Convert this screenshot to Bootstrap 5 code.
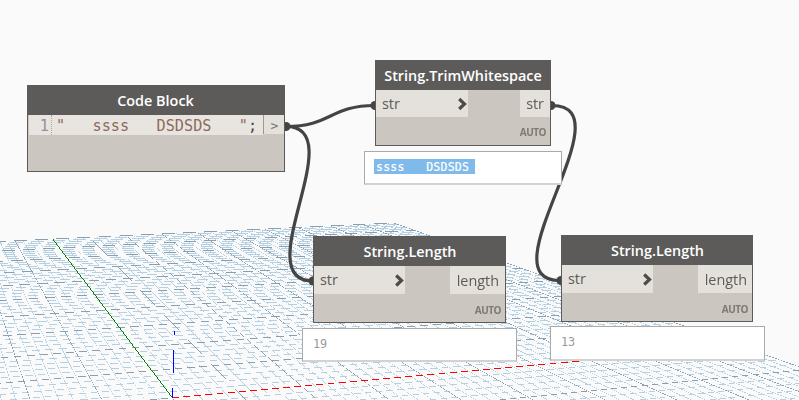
<!DOCTYPE html>
<html lang="en">
<head>
<meta charset="utf-8">
<title>Node graph</title>
<link href="https://cdn.jsdelivr.net/npm/bootstrap@5.3.0/dist/css/bootstrap.min.css" rel="stylesheet">
<style>
body{margin:0;background:#fafafa;font-family:"Open Sans","Noto Sans",sans-serif;color:#5d5b59}
.workspace{width:799px;height:400px}
.layer{left:0;top:0}
.node{background:#cbc6bf;border:1px solid #5d5b59}
.node-title{background:#5d5b59;color:#fff;font-weight:600;font-size:14.4px;height:29px;line-height:30px}
.n-code .node-title{padding-right:1px}
.n-len1 .node-title,.n-len2 .node-title{padding-left:1px}
.ports{height:28px;font-size:14.4px;line-height:30px}
.n-trim .ports{height:27px;line-height:28px}
.port{background:#e4e1dc}
.port-in{width:91px;padding:0 0 0 6px}
.n-trim .port-in{width:92px}
.port-out{padding:0 6px 0 7px}
.n-len2 .port-out{padding:0 5px 0 7px}
.n-trim .port-out{padding:0 6px 0 6px}
.lacing{font-size:10px;font-weight:700;color:#7d7974;padding-right:4px;line-height:31px;height:28px;letter-spacing:-.5px}
.n-len1 .lacing,.n-len2 .lacing{line-height:32px}
.n-code{left:27px;top:85px;width:258px;height:87px}
.n-trim{left:375px;top:60px;width:176px;height:86px}
.n-len1{left:313px;top:236px;width:193px;height:87px}
.n-len2{left:561px;top:235px;width:192px;height:87px}
.code-row{height:20px;font:15.2px/22px "DejaVu Sans Mono",monospace;white-space:pre}
.code-text{background:#e8e5e1;width:234px;margin-left:1px;color:#8e6a5c}
.gutter{width:23px;color:#929292;border-right:1px dotted #aaa;padding-right:2px}
.code-end{color:#444}
.code-port{width:21px;height:19px;background:#e4e1dc;border-left:1px solid #999;font-size:13px;color:#777;padding-left:1px}
.watch{background:#fff;border:1px solid #aaa;border-bottom:2px solid #d2d2d2;font:11.8px/16px "DejaVu Sans Mono",monospace;white-space:pre;color:#999;padding:7px 0 0 10px}
.w1{left:364px;top:151px;width:198px;height:34px;padding-left:9px}
.w2{left:302px;top:328px;width:215px;height:34px}
.w3{left:550px;top:326px;width:215px;height:35px}
.picked{background:#7fbaea;color:#fff;height:15px;line-height:17px;width:101px;padding-left:2px;font-size:11.5px;letter-spacing:.24px;-webkit-text-stroke:.2px #fff}
</style>
</head>
<body>
<main class="workspace position-relative overflow-hidden">
<canvas id="grid" class="layer position-absolute" width="799" height="400"></canvas>
<svg class="layer position-absolute" width="799" height="400" fill="none" stroke="#444" stroke-width="3.200">
<path d="M286 126.500C331 126.500 330 105.500 375 105.500M286 126.500C353 126.500 246 281 313 281M552 105.500C629 105.500 483 280.500 560 280.500"/>
<g fill="#444" stroke="none"><circle cx="286" cy="126.500" r="4.500"/><circle cx="375" cy="105.500" r="4.500"/><circle cx="551" cy="105.500" r="4.500"/><circle cx="313" cy="281" r="4.500"/><circle cx="561" cy="280.500" r="4.500"/></g>
</svg>

<section class="node n-code position-absolute">
<div class="node-title text-center">Code Block</div>
<div class="code-row d-flex"><div class="code-text d-flex"><span class="gutter text-end">1</span><span class="ps-1">"   ssss   DSDSDS   "<span class="code-end">;</span></span></div><div class="code-port text-center">&gt;</div></div>
</section>

<section class="node n-trim position-absolute">
<div class="node-title text-center">String.TrimWhitespace</div>
<div class="ports d-flex justify-content-between"><div class="port port-in d-flex justify-content-between align-items-center"><span>str</span><svg width="11" height="14" viewBox="0 0 11 14" fill="none" stroke="#4d4b49" stroke-width="3.200"><path d="M2.200 2L7.500 7L2.200 12"/></svg></div><div class="port port-out">str</div></div>
<div class="lacing text-end">AUTO</div>
</section>
<div class="watch w1 position-absolute"><div class="picked">ssss   DSDSDS</div></div>

<section class="node n-len1 position-absolute">
<div class="node-title text-center">String.Length</div>
<div class="ports d-flex justify-content-between"><div class="port port-in d-flex justify-content-between align-items-center"><span>str</span><svg width="11" height="14" viewBox="0 0 11 14" fill="none" stroke="#4d4b49" stroke-width="3.200"><path d="M2.200 2.500L7.500 7.500L2.200 12.500"/></svg></div><div class="port port-out">length</div></div>
<div class="lacing text-end">AUTO</div>
</section>
<div class="watch w2 position-absolute">19</div>

<section class="node n-len2 position-absolute">
<div class="node-title text-center">String.Length</div>
<div class="ports d-flex justify-content-between"><div class="port port-in d-flex justify-content-between align-items-center"><span>str</span><svg width="11" height="14" viewBox="0 0 11 14" fill="none" stroke="#4d4b49" stroke-width="3.200"><path d="M2.200 2.500L7.500 7.500L2.200 12.500"/></svg></div><div class="port port-out">length</div></div>
<div class="lacing text-end">AUTO</div>
</section>
<div class="watch w3 position-absolute">13</div>
</main>
<script src="https://cdn.jsdelivr.net/npm/bootstrap@5.3.0/dist/js/bootstrap.bundle.min.js"></script>
<script>
// Ground plane: unit grid from -50 to 50 seen in perspective, every fifth line darker.
const ctx = document.getElementById('grid').getContext('2d');
const A = 0.003486, B = 0.01699, MIN_W = 0.7;
const hom = (k, j) => [172.3 + k*A*4010 - j*B*88, 397.8 + (k*A + j*B)*52, 1 + k*A + j*B];
function line(k0, j0, k1, j1, color, gate) {
  let p = hom(k0, j0), q = hom(k1, j1);
  if (p[2] < MIN_W && q[2] < MIN_W) return;
  if (p[2] < MIN_W) { const t = (MIN_W - p[2])/(q[2] - p[2]); p = p.map((v, i) => v + t*(q[i] - v)); }
  const x0 = p[0]/p[2], y0 = p[1]/p[2], x1 = q[0]/q[2], y1 = q[1]/q[2];
  ctx.fillStyle = color;
  if (Math.abs(x1 - x0) > Math.abs(y1 - y0)) {
    const s = (y1 - y0)/(x1 - x0), end = Math.min(799, Math.max(x0, x1));
    for (let x = Math.max(0, Math.ceil(Math.min(x0, x1))); x < end; x++) {
      const y = y0 + s*(x + .5 - x0), r = Math.floor(y);
      if (Math.abs(y - r - .5) < gate) ctx.fillRect(x, r, 1, 1);
    }
  } else {
    const s = (x1 - x0)/(y1 - y0), end = Math.min(400, Math.max(y0, y1));
    for (let y = Math.max(0, Math.ceil(Math.min(y0, y1))); y < end; y++) {
      const x = x0 + s*(y + .5 - y0), c = Math.floor(x);
      if (Math.abs(x - c - .5) < gate) ctx.fillRect(c, y, 1, 1);
    }
  }
}
for (const dark of [false, true])
  for (let i = -50; i <= 50; i++) {
    if ((i % 5 === 0) !== dark) continue;
    const c = dark ? '#8b9fae' : '#b4d0e2';
    line(-50, i, 50, i, c, .3);
    line(i, -50, i, 50, c, .3);
  }
line(0, 0, 50, 0, '#ff0000', .31);
line(0, 0, 0, 50, '#008000', .5);
ctx.fillStyle = '#0000ff';
ctx.fillRect(172, 388, 1, 10);
ctx.fillRect(173, 350, 1, 23);
ctx.fillRect(174, 331, 1, 4);
</script>
</body>
</html>
